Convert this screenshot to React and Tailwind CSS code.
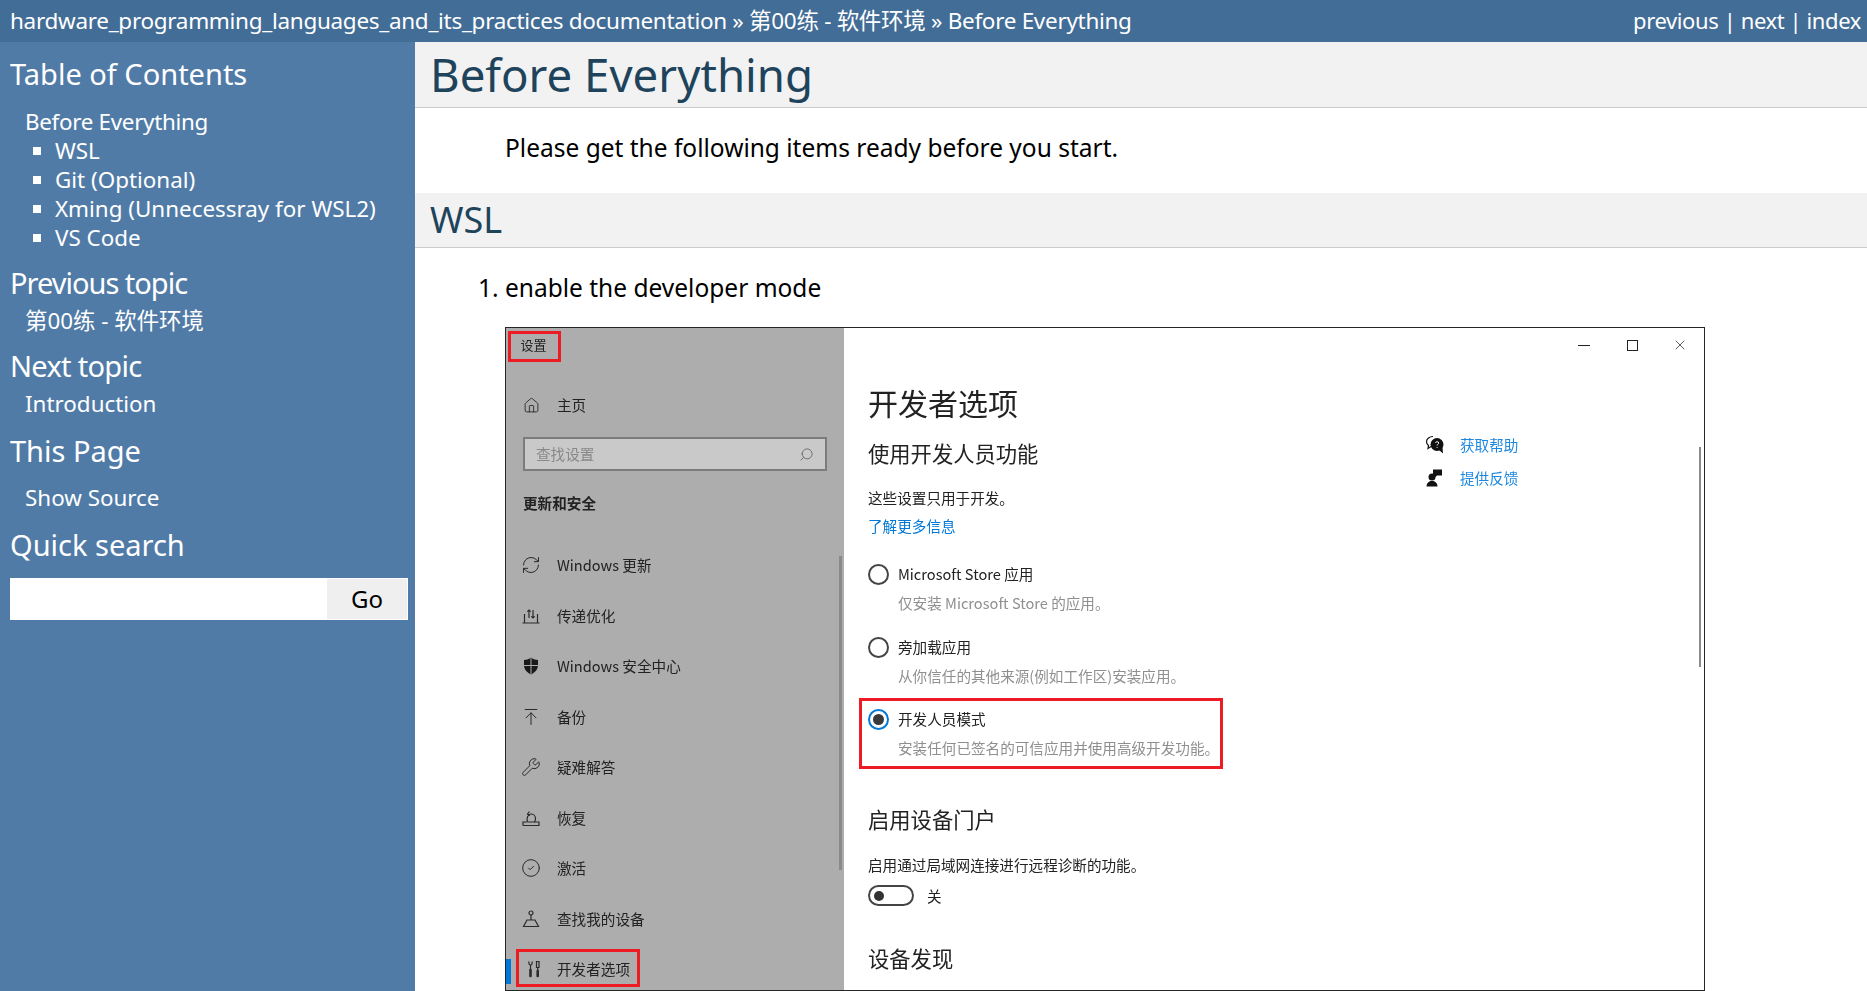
import { House, RefreshCw, Wrench, CircleCheck, ArrowUpToLine, Search, X } from 'lucide-react';

const NavIcon = ({ name }) => {
  const base = { width: 20, height: 20, viewBox: '0 0 20 20', fill: 'none', stroke: '#2a2a2a', strokeWidth: 1.2 };
  if (name === 'update') return <RefreshCw size={20} strokeWidth={1.2} color="#2a2a2a" />;
  if (name === 'delivery')
    return (
      <svg {...base}>
        <path d="M1.500 17h17M3.500 17v-2.500M16.500 17v-2.500M3.500 14.500V8M16.500 14.500V8" />
        <path d="M8 12V4M6.300 5.700 8 4l1.700 1.700M12 4v8M10.300 10.300 12 12l1.700-1.700" />
      </svg>
    );
  if (name === 'shield')
    return (
      <svg width="20" height="20" viewBox="0 0 20 20">
        <path d="M10 1.500c2.500 1.800 4.800 2.500 7 2.500v5c0 4.500-3 7.500-7 9.500-4-2-7-5-7-9.500V4c2.200 0 4.500-.7 7-2.500Z" fill="#1a1a1a" />
        <path d="M10 1.500v17M3 9.500h14" stroke="#adadad" strokeWidth="1" />
      </svg>
    );
  if (name === 'backup') return <ArrowUpToLine size={20} strokeWidth={1.2} color="#2a2a2a" />;
  if (name === 'wrench') return <Wrench size={20} strokeWidth={1.2} color="#2a2a2a" />;
  if (name === 'recovery')
    return (
      <svg {...base}>
        <path d="M2 17.500h16V14h-4.500M6.500 14H2v3.500" />
        <path d="M6.500 14c-1.500-3.500.5-8 3.500-8 2 0 4.500 1.500 4.500 4.500 0 1.300-.5 2.700-1 3.500H7" />
        <path d="M8.500 3.500 6.500 6l2.500 1.500" />
      </svg>
    );
  if (name === 'activate') return <CircleCheck size={20} strokeWidth={1.2} color="#2a2a2a" />;
  if (name === 'find')
    return (
      <svg {...base}>
        <circle cx="10" cy="4" r="2" />
        <path d="M10 6v5M6 11h8l3.500 6.500h-15L6 11Z" />
      </svg>
    );
  return (
    <svg {...base}>
      <path d="M4 2.500c-.5 2 .2 3.500 1.500 3.500S7.500 4.500 7 2.500M5.500 6v5" />
      <path d="M5.500 11v6" strokeWidth="2.600" strokeLinecap="round" />
      <path d="M11.500 2.500h2.500v6h-2.500zM12.700 8.500V12" strokeWidth="1.200" />
      <path d="M12.700 12v5" strokeWidth="2.600" strokeLinecap="round" />
    </svg>
  );
};

const navItems = [
  ['update', 'Windows 更新'],
  ['delivery', '传递优化'],
  ['shield', 'Windows 安全中心'],
  ['backup', '备份'],
  ['wrench', '疑难解答'],
  ['recovery', '恢复'],
  ['activate', '激活'],
  ['find', '查找我的设备'],
];

const SettingsShot = () => (
  <div className="relative flex w-[1200px] h-[664px] border border-[#262626] overflow-hidden blur-[0.35px] text-[14.600px] text-[#222] font-['Noto_Sans_CJK_SC','Noto_Sans',sans-serif]">
    <div className="relative flex flex-col w-[338px] shrink-0 bg-[#adadad]">
      <div className="ml-[2px] mt-[3px] flex items-center justify-center w-[53px] h-[31px] border-[3px] border-[#ed1c24] text-[13px] pb-[3px] pr-[2px]">设置</div>
      <div className="ml-[17px] mt-[28px] flex items-center gap-[17px] h-[30px]">
        <House size={17} strokeWidth={1.3} color="#2a2a2a" />
        <span>主页</span>
      </div>
      <div className="ml-[17px] mt-[17px] flex items-center justify-between w-[304px] h-[34px] px-[11px] border-2 border-[#7c7c7c] bg-[#c9c9c9] text-[#888]">
        <span>查找设置</span>
        <Search size={15} strokeWidth={1.4} color="#666" className="-scale-x-100" />
      </div>
      <div className="ml-[17px] mt-[21px] h-[22px] font-bold leading-[22px]">更新和安全</div>
      <div className="mt-[26px] flex flex-col">
        {navItems.map(([icon, label]) => (
          <div key={label} className="ml-[15px] flex items-center gap-[16px] h-[50.500px]">
            <NavIcon name={icon} />
            <span>{label}</span>
          </div>
        ))}
      </div>
      <div className="mt-[5px] ml-[10px] flex items-center gap-[12px] w-[124px] h-[38px] border-[3px] border-[#ed1c24] pl-[6px] pt-[2px]">
        <NavIcon name="dev" />
        <span>开发者选项</span>
      </div>
      <div className="absolute left-0 bottom-[6px] w-[5px] h-[25px] bg-[#0078d7]" />
      <div className="absolute right-[2px] top-[228px] w-[3px] h-[314px] bg-[#8a8a8a]" />
    </div>

    <div className="flex flex-col flex-1 pl-[24px] bg-white">
      <h2 className="mt-[56px] text-[30px] leading-[36px]">开发者选项</h2>
      <h3 className="mt-[19px] text-[21.300px] leading-[28px]">使用开发人员功能</h3>
      <p className="mt-[21px] leading-[20px]">这些设置只用于开发。</p>
      <p className="mt-[8px] leading-[20px] text-[#0078d7]">了解更多信息</p>
      <div className="mt-[27px] flex items-center gap-[9px] h-[22px]">
        <span className="w-[21px] h-[21px] rounded-full border-2 border-[#444]" />
        <span>Microsoft Store 应用</span>
      </div>
      <p className="mt-[8px] ml-[30px] leading-[20px] text-[#8f8f8f]">仅安装 Microsoft Store 的应用。</p>
      <div className="mt-[23px] flex items-center gap-[9px] h-[22px]">
        <span className="w-[21px] h-[21px] rounded-full border-2 border-[#444]" />
        <span>旁加载应用</span>
      </div>
      <p className="mt-[8px] ml-[30px] leading-[20px] text-[#8f8f8f]">从你信任的其他来源(例如工作区)安装应用。</p>
      <div className="mt-[12px] -ml-[9px] w-[364px] h-[71px] border-[3px] border-[#ed1c24] pl-[6px] pt-[7px]">
        <div className="flex items-center gap-[9px] h-[22px]">
          <span className="flex items-center justify-center w-[21px] h-[21px] rounded-full border-2 border-[#0078d7]">
            <span className="w-[11px] h-[11px] rounded-full bg-[#3a3a3a]" />
          </span>
          <span>开发人员模式</span>
        </div>
        <p className="mt-[8px] ml-[30px] leading-[20px] text-[#8f8f8f] whitespace-nowrap">安装任何已签名的可信应用并使用高级开发功能。</p>
      </div>
      <h3 className="mt-[36px] text-[21.300px] leading-[28px]">启用设备门户</h3>
      <p className="mt-[22px] leading-[20px]">启用通过局域网连接进行远程诊断的功能。</p>
      <div className="mt-[10px] flex items-center gap-[13px] h-[21px]">
        <span className="flex items-center w-[46px] h-[21px] rounded-full border-2 border-[#444] pl-[4px]">
          <span className="w-[10px] h-[10px] rounded-full bg-[#333]" />
        </span>
        <span>关</span>
      </div>
      <h3 className="mt-[38px] text-[21.300px] leading-[28px]">设备发现</h3>
    </div>

    <div className="absolute right-[16px] top-[9px] flex items-center">
      <span className="w-[12px] h-[1px] bg-[#222]" />
      <span className="ml-[37px] w-[11px] h-[11px] border border-[#222]" />
      <X size={16} strokeWidth={1.1} color="#222" className="ml-[34px]" />
    </div>
    <div className="absolute left-[919px] top-[106px] flex flex-col gap-[12px] text-[#1e88e0]">
      <div className="flex items-center gap-[15px] h-[21px]">
        <svg width="20" height="20" viewBox="0 0 20 20">
          <path d="M8 1.500c-3.500 0-6.500 2.200-6.500 5.200 0 1.600.8 2.900 2 3.800l-.5 3 3-2" fill="none" stroke="#111" strokeWidth="1.200" />
          <circle cx="12" cy="9.500" r="6.500" fill="#111" />
          <path d="m14 15 4 3.500-.5-6" fill="#111" />
          <path d="M10.500 7.800c.3-1.500 3.200-1.500 3.200.2 0 1.200-1.600 1.200-1.600 2.500M12.100 12v.8" fill="none" stroke="#fff" strokeWidth="1" />
        </svg>
        <span>获取帮助</span>
      </div>
      <div className="flex items-center gap-[15px] h-[21px]">
        <svg width="20" height="20" viewBox="0 0 20 20">
          <circle cx="7" cy="9" r="3.500" fill="#111" />
          <path d="M1.500 18.500c0-3.500 2.500-5.500 5.500-5.500s5.500 2 5.500 5.500Z" fill="#111" />
          <path d="M8 1.500h9v6h-5l-2 2v-2.500H8Z" fill="#111" />
        </svg>
        <span>提供反馈</span>
      </div>
    </div>
    <div className="absolute right-[3px] top-[119px] w-[2px] h-[220px] bg-[#8a8a8a]" />
  </div>
);

const SideHeading = ({ children, className }) => (
  <h3 className={`text-[29px] leading-[40px] text-white ${className}`}>{children}</h3>
);

export default function App() {
  return (
    <div className="h-screen overflow-hidden flex flex-col bg-white font-['Noto_Sans','Noto_Sans_CJK_SC',sans-serif]">
      <div className="flex items-center justify-between h-[42px] shrink-0 pl-[10px] pr-[6px] bg-[#426d97] text-white text-[22.500px] tracking-[-0.3px]">
        <div>hardware_programming_languages_and_its_practices documentation » 第00练 - 软件环境 » Before Everything</div>
        <div className="text-[22px] tracking-[-0.4px] pb-[1px]">previous | next | index</div>
      </div>
      <div className="flex flex-1 min-h-0">
        <aside className="w-[415px] shrink-0 px-[10px] pt-[12px] bg-[#517ba7] text-white text-[22.400px]">
          <SideHeading>Table of Contents</SideHeading>
          <div className="mt-[13px] ml-[15px] leading-[29px] tracking-[-0.3px]">Before Everything</div>
          <ul className="ml-[23px] leading-[29px]">
            {['WSL', 'Git (Optional)', 'Xming (Unnecessray for WSL2)', 'VS Code'].map((t) => (
              <li key={t} className="flex items-center gap-[14px]">
                <span className="w-[8px] h-[8px] bg-white" />
                {t}
              </li>
            ))}
          </ul>
          <SideHeading className="mt-[11px] tracking-[-1px]">Previous topic</SideHeading>
          <div className="ml-[15px] leading-[36px]">第00练 - 软件环境</div>
          <SideHeading className="mt-[7px] tracking-[-0.7px]">Next topic</SideHeading>
          <div className="ml-[15px] leading-[36px]">Introduction</div>
          <SideHeading className="mt-[9px]">This Page</SideHeading>
          <div className="mt-[9px] ml-[15px] leading-[36px]">Show Source</div>
          <SideHeading className="mt-[9px]">Quick search</SideHeading>
          <div className="mt-[13px] flex w-[398px] h-[42px] bg-white p-[1px]">
            <div className="flex-1" />
            <button className="w-[80px] bg-[#efefef] text-black text-[24px]">Go</button>
          </div>
        </aside>
        <main className="flex-1 min-w-0 text-[24.500px] text-black">
          <h1 className="h-[66px] pl-[15px] bg-[#f2f2f2] border-b border-[#ccc] text-[45.600px] leading-[64px] text-[#20435c]">Before Everything</h1>
          <p className="mt-[22px] ml-[90px] leading-[36px]">Please get the following items ready before you start.</p>
          <h2 className="mt-[27px] h-[55px] pl-[15px] bg-[#f2f2f2] border-b border-[#ccc] text-[36px] leading-[54px] text-[#20435c]">WSL</h2>
          <div className="mt-[22px] ml-[63px] flex leading-[36px]">
            <span className="w-[27px]">1.</span>
            <span>enable the developer mode</span>
          </div>
          <div className="mt-[21px] ml-[90px]">
            <SettingsShot />
          </div>
        </main>
      </div>
    </div>
  );
}
